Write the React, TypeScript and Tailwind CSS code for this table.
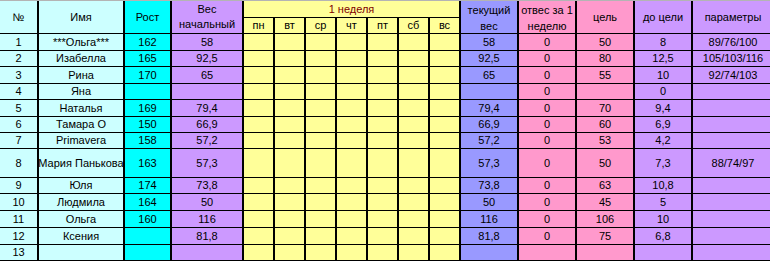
const days = ["пн", "вт", "ср", "чт", "пт", "сб", "вс"];

type Row = {
  n: number;
  name: string;
  height: string;
  start: string;
  current: string;
  loss: string;
  goal: string;
  left: string;
  params: string;
};

const rows: Row[] = [
  { n: 1, name: "***Ольга***", height: "162", start: "58", current: "58", loss: "0", goal: "50", left: "8", params: "89/76/100" },
  { n: 2, name: "Изабелла", height: "165", start: "92,5", current: "92,5", loss: "0", goal: "80", left: "12,5", params: "105/103/116" },
  { n: 3, name: "Рина", height: "170", start: "65", current: "65", loss: "0", goal: "55", left: "10", params: "92/74/103" },
  { n: 4, name: "Яна", height: "", start: "", current: "", loss: "0", goal: "", left: "0", params: "" },
  { n: 5, name: "Наталья", height: "169", start: "79,4", current: "79,4", loss: "0", goal: "70", left: "9,4", params: "" },
  { n: 6, name: "Тамара О", height: "150", start: "66,9", current: "66,9", loss: "0", goal: "60", left: "6,9", params: "" },
  { n: 7, name: "Primavera", height: "158", start: "57,2", current: "57,2", loss: "0", goal: "53", left: "4,2", params: "" },
  { n: 8, name: "Мария Панькова", height: "163", start: "57,3", current: "57,3", loss: "0", goal: "50", left: "7,3", params: "88/74/97" },
  { n: 9, name: "Юля", height: "174", start: "73,8", current: "73,8", loss: "0", goal: "63", left: "10,8", params: "" },
  { n: 10, name: "Людмила", height: "164", start: "50", current: "50", loss: "0", goal: "45", left: "5", params: "" },
  { n: 11, name: "Ольга", height: "160", start: "116", current: "116", loss: "0", goal: "106", left: "10", params: "" },
  { n: 12, name: "Ксения", height: "", start: "81,8", current: "81,8", loss: "0", goal: "75", left: "6,8", params: "" },
  { n: 13, name: "", height: "", start: "", current: "", loss: "", goal: "", left: "", params: "" },
];

function Cell({ className = "", children }: { className?: string; children?: React.ReactNode }) {
  return (
    <div className={`flex items-center justify-center overflow-hidden whitespace-nowrap text-center ${className}`}>
      {children}
    </div>
  );
}

export default function App() {
  return (
    <div className="h-[261px] w-[770px] overflow-hidden bg-white font-['Liberation_Sans',Arial,sans-serif] text-[11px] text-black">
      <div className="w-[800px] border-t border-[#b4b4b4] bg-black pb-px">
        <div className="grid grid-cols-[37px_84px_45px_70px_repeat(7,29px)_56px_56px_56px_56px_80px] grid-rows-[16px_15px_16px_15px_16px_15px_16px_15px_15px_28px_15px_16px_16px_16px_15px] gap-x-[2px] gap-y-px">
          <Cell className="row-span-2 bg-[#ccffff]">№</Cell>
          <Cell className="row-span-2 bg-[#ccffff]">Имя</Cell>
          <Cell className="row-span-2 bg-[#00ffff]">Рост</Cell>
          <Cell className="row-span-2 bg-[#cc99ff] leading-[15px]">
            Вес
            <br />
            начальный
          </Cell>
          <Cell className="col-span-7 bg-[#ffff99] text-[#800000]">1 неделя</Cell>
          <Cell className="row-span-2 items-start bg-[#9999ff] pt-px leading-[16px]">
            текущий
            <br />
            вес
          </Cell>
          <Cell className="row-span-2 items-start bg-[#ff99cc] pt-px leading-[16px]">
            отвес за 1
            <br />
            неделю
          </Cell>
          <Cell className="row-span-2 bg-[#ff99cc]">цель</Cell>
          <Cell className="row-span-2 bg-[#cc99ff]">до цели</Cell>
          <Cell className="row-span-2 bg-[#cc99ff]">параметры</Cell>
          {days.map((d) => (
            <Cell key={d} className="bg-[#ffff99]">
              {d}
            </Cell>
          ))}

          {rows.map((r) => (
            <div key={r.n} className="contents">
              <Cell className="bg-[#ccffff]">{r.n}</Cell>
              <Cell className="bg-[#ccffff]">{r.name}</Cell>
              <Cell className="bg-[#00ffff]">{r.height}</Cell>
              <Cell className="bg-[#cc99ff]">{r.start}</Cell>
              {days.map((d) => (
                <Cell key={d} className="bg-[#ffff99]" />
              ))}
              <Cell className="bg-[#9999ff]">{r.current}</Cell>
              <Cell className="bg-[#ff99cc]">{r.loss}</Cell>
              <Cell className="bg-[#ff99cc]">{r.goal}</Cell>
              <Cell className="bg-[#cc99ff]">{r.left}</Cell>
              <Cell className="bg-[#cc99ff]">{r.params}</Cell>
            </div>
          ))}
        </div>
      </div>
    </div>
  );
}
